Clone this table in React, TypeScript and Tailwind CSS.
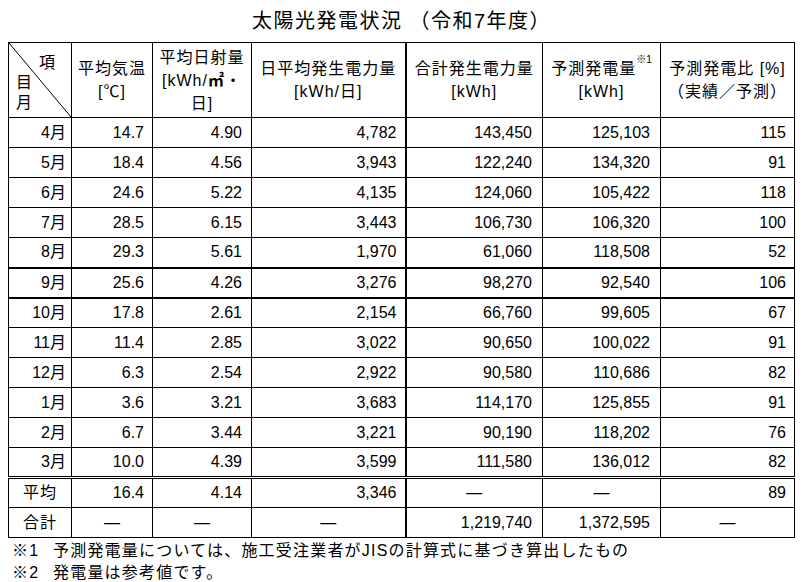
import React from "react";

type Row = [string, string, string, string, string, string, string];

const rows: Row[] = [
  ["4月", "14.7", "4.90", "4,782", "143,450", "125,103", "115"],
  ["5月", "18.4", "4.56", "3,943", "122,240", "134,320", "91"],
  ["6月", "24.6", "5.22", "4,135", "124,060", "105,422", "118"],
  ["7月", "28.5", "6.15", "3,443", "106,730", "106,320", "100"],
  ["8月", "29.3", "5.61", "1,970", "61,060", "118,508", "52"],
  ["9月", "25.6", "4.26", "3,276", "98,270", "92,540", "106"],
  ["10月", "17.8", "2.61", "2,154", "66,760", "99,605", "67"],
  ["11月", "11.4", "2.85", "3,022", "90,650", "100,022", "91"],
  ["12月", "6.3", "2.54", "2,922", "90,580", "110,686", "82"],
  ["1月", "3.6", "3.21", "3,683", "114,170", "125,855", "91"],
  ["2月", "6.7", "3.44", "3,221", "90,190", "118,202", "76"],
  ["3月", "10.0", "4.39", "3,599", "111,580", "136,012", "82"],
];

const DASH = "―";

export default function App() {
  return (
    <div
      className="w-[803px] h-[582px] bg-white text-black overflow-hidden"
      style={{ fontFamily: '"Liberation Sans", "Noto Sans CJK JP", sans-serif' }}
    >
      {/* Title */}
      <h1 className="h-[42px] flex items-center justify-center text-[20px] leading-none tracking-[1.5px]">
        太陽光発電状況 （令和7年度）
      </h1>

      {/* Table */}
      <table className="ml-[8px] w-[786px] table-fixed border-collapse text-[16px] leading-none">
        <colgroup>
          <col className="w-[63px]" />
          <col className="w-[81px]" />
          <col className="w-[99px]" />
          <col className="w-[154px]" />
          <col className="w-[137px]" />
          <col className="w-[118px]" />
          <col className="w-[134px]" />
        </colgroup>
        <thead>
          <tr className="h-[75px] text-[16px] leading-[23px] tracking-[1px]">
            <th className="relative border border-black p-0 font-normal">
              <svg className="absolute inset-0 w-full h-full" preserveAspectRatio="none" viewBox="0 0 100 100">
                <line x1="0" y1="0" x2="100" y2="100" stroke="black" strokeWidth="1" vectorEffect="non-scaling-stroke" />
              </svg>
              <div className="relative h-[74px] flex flex-col">
                <span className="self-end pr-[15px] pt-[8px]">項</span>
                <span className="self-start pl-[7px] mt-[-3px]">目</span>
                <span className="self-start pl-[7px] mt-[-3px]">月</span>
              </div>
            </th>
            <th className="border border-black p-0 font-normal">
              平均気温
              <br />
              [℃]
            </th>
            <th className="border border-black p-0 font-normal">
              平均日射量
              <br />
              [kWh/<b>㎡</b>・
              <br />
              日]
            </th>
            <th className="border border-black border-r-2 p-0 font-normal">
              日平均発生電力量
              <br />
              [kWh/日]
            </th>
            <th className="border border-black p-0 font-normal">
              合計発生電力量
              <br />
              [kWh]
            </th>
            <th className="border border-black p-0 font-normal">
              予測発電量<sup className="text-[10px] tracking-normal align-[6px]">※1</sup>
              <br />
              [kWh]
            </th>
            <th className="border border-black p-0 font-normal">
              予測発電比 [%]
              <br />
              （実績／予測）
            </th>
          </tr>
        </thead>
        <tbody>
          {rows.map((r) => {
            const thick = r[0] === "8月" || r[0] === "9月";
            const dbl = r[0] === "3月";
            const b = dbl
              ? "border border-black border-double border-b-[3px]"
              : thick
              ? "border border-black border-b-2"
              : "border border-black";
            return (
              <tr key={r[0]} className="h-[30px]">
                <td className={`${b} text-right pr-[5px]`}>{r[0]}</td>
                <td className={`${b} text-right pr-[8px]`}>{r[1]}</td>
                <td className={`${b} text-right pr-[9px]`}>{r[2]}</td>
                <td className={`${b} border-r-2 text-right pr-[8px]`}>{r[3]}</td>
                <td className={`${b} text-right pr-[10px]`}>{r[4]}</td>
                <td className={`${b} text-right pr-[10px]`}>{r[5]}</td>
                <td className={`${b} text-right pr-[8px]`}>{r[6]}</td>
              </tr>
            );
          })}
          <tr className="h-[30px]">
            <td className="border border-black text-center tracking-[1px]">平均</td>
            <td className="border border-black text-right pr-[8px]">16.4</td>
            <td className="border border-black text-right pr-[9px]">4.14</td>
            <td className="border border-black border-r-2 text-right pr-[8px]">3,346</td>
            <td className="border border-black text-center">{DASH}</td>
            <td className="border border-black text-center">{DASH}</td>
            <td className="border border-black text-right pr-[8px]">89</td>
          </tr>
          <tr className="h-[30px]">
            <td className="border border-black text-center tracking-[1px]">合計</td>
            <td className="border border-black text-center">{DASH}</td>
            <td className="border border-black text-center">{DASH}</td>
            <td className="border border-black border-r-2 text-center">{DASH}</td>
            <td className="border border-black text-right pr-[10px]">1,219,740</td>
            <td className="border border-black text-right pr-[10px]">1,372,595</td>
            <td className="border border-black text-center">{DASH}</td>
          </tr>
        </tbody>
      </table>

      {/* Notes */}
      <div className="pl-[12px] pt-[2px] text-[16px] leading-[22px] tracking-[1.2px]">
        <div className="flex">
          <span className="w-[41px] shrink-0">※1</span>
          <span>予測発電量については、施工受注業者がJISの計算式に基づき算出したもの</span>
        </div>
        <div className="flex">
          <span className="w-[41px] shrink-0">※2</span>
          <span>発電量は参考値です。</span>
        </div>
      </div>
    </div>
  );
}
